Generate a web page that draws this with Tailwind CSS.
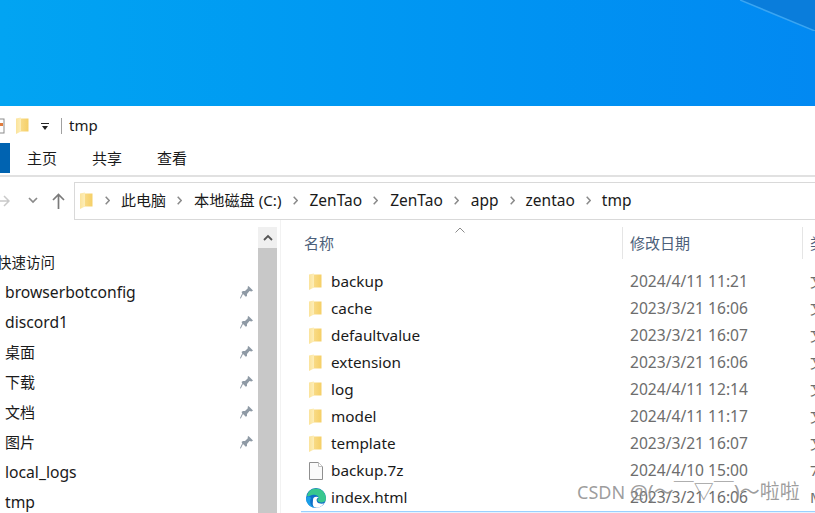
<!DOCTYPE html>
<html lang="zh">
<head>
<meta charset="utf-8">
<script src="https://cdn.jsdelivr.net/npm/@tailwindcss/browser@4"></script>
</head>
<body class="w-[815px] h-[513px] overflow-hidden bg-white font-['Noto_Sans','Noto_Sans_CJK_SC',sans-serif] text-[15.3px] text-[#1a1a1a]">
<svg class="absolute w-0 h-0"><defs>
<linearGradient id="fg" x1="0" x2="1" y1="0" y2="0"><stop offset="0" stop-color="#f9dc8a"/><stop offset="1" stop-color="#f5cf66"/></linearGradient>
<linearGradient id="fl" x1="0" x2="1" y1="0" y2="0"><stop offset="0" stop-color="#fbe39b"/><stop offset="1" stop-color="#fdeeb9"/></linearGradient>
<g id="folder"><path d="M4 1.500 H12.500 V14.500 H4 Z" fill="url(#fg)"/><path d="M0 1.500 L5 .5 V14.500 L0 17 Z" fill="url(#fl)"/></g>
<g id="pin"><path d="M8.500 0 L13 4.500 L11.500 5.500 L9.500 5 L7 8 L7 10 L5.800 10.800 L3 8 L0.700 12.800 L0 12 L2.300 7.300 L1.500 6 L3 5 L5 5 L8 2 L7.500 1 Z" fill="#8f9aa5"/></g>
</defs></svg>

<div class="h-[106px] relative overflow-hidden bg-gradient-to-r from-[#02a4f2] to-[#0289f2]">
  <svg class="absolute right-0 top-0 w-[75px] h-[31px]" viewBox="0 0 75 31"><path d="M0 0 L75 31 V0 Z" fill="#0a7ddb"/><path d="M0 0 L75 31" stroke="#3aa5f2" stroke-width="1.500"/></svg>
</div>

<div class="h-[37px] flex items-center pt-[2px]">
  <svg class="w-[6px] h-[20px] mr-[10px]" viewBox="0 0 6 20"><rect x="-6" y="3" width="10" height="14" fill="#fff" stroke="#8b8b8b"/><rect x="0" y="7" width="3" height="3" fill="#e07b3c"/></svg>
  <svg class="w-[13px] h-[17px] mr-[12px]" viewBox="0 0 13 17"><use href="#folder"/></svg>
  <svg class="w-[8px] h-[8px] mr-[12px] mt-[3px]" viewBox="0 0 8 8"><rect y="0" width="8" height="1" fill="#222"/><path d="M1 3 H7 L4 7 Z" fill="#222"/></svg>
  <div class="w-px h-[16px] bg-[#a0a0a0] mr-[7px]"></div>
  <span class="text-[15px] leading-none">tmp</span>
</div>

<div class="h-[32px] flex items-center border-b-2 border-[#e1e1e1] text-[15px] box-content -mb-px">
  <div class="w-[10px] h-[30px] bg-[#0063b1] -mt-[2px] mr-[17px]"></div>
  <span class="w-[65px] -mt-px">主页</span>
  <span class="w-[65px] -mt-px">共享</span>
  <span class="-mt-px">查看</span>
</div>

<div class="h-[44px] flex items-center pt-[5px]">
  <svg class="w-[10px] h-[14px] mr-[18px]" viewBox="0 0 10 14" fill="none" stroke="#c9c9c9" stroke-width="1.500"><path d="M-2 7 H9 M4 2 L9 7 L4 12"/></svg>
  <svg class="w-[10px] h-[7px] mr-[14px]" viewBox="0 0 10 7" fill="none" stroke="#8a8a8a" stroke-width="1.700"><path d="M1 1 L5 5 L9 1"/></svg>
  <svg class="w-[13px] h-[16px] mr-[9px]" viewBox="0 0 13 16" fill="none" stroke="#7a7a7a" stroke-width="1.700"><path d="M6.500 16 V1.500 M1 7 L6.500 1.500 L12 7"/></svg>
  <div class="flex-1 h-[38px] border border-r-0 border-[#d9d9d9] flex items-center pl-[5px] text-[15.500px] whitespace-nowrap overflow-hidden">
    <svg class="w-[13px] h-[17px] shrink-0" viewBox="0 0 13 17"><use href="#folder"/></svg>
    <svg class="w-[5px] h-[9px] ml-[12px] mr-[11px] shrink-0" viewBox="0 0 5 9" fill="none" stroke="#8a8a8a" stroke-width="1.500"><path d="M.7 .7 L4.200 4.500 L.7 8.300"/></svg>
    <span class="text-[15px]">此电脑</span>
    <svg class="w-[5px] h-[9px] ml-[11px] mr-[12px] shrink-0" viewBox="0 0 5 9" fill="none" stroke="#8a8a8a" stroke-width="1.500"><path d="M.7 .7 L4.200 4.500 L.7 8.300"/></svg>
    <span class="text-[15.200px]">本地磁盘 (C:)</span>
    <svg class="w-[5px] h-[9px] ml-[11px] mr-[12px] shrink-0" viewBox="0 0 5 9" fill="none" stroke="#8a8a8a" stroke-width="1.500"><path d="M.7 .7 L4.200 4.500 L.7 8.300"/></svg>
    <span>ZenTao</span>
    <svg class="w-[5px] h-[9px] ml-[11px] mr-[12px] shrink-0" viewBox="0 0 5 9" fill="none" stroke="#8a8a8a" stroke-width="1.500"><path d="M.7 .7 L4.200 4.500 L.7 8.300"/></svg>
    <span>ZenTao</span>
    <svg class="w-[5px] h-[9px] ml-[11px] mr-[12px] shrink-0" viewBox="0 0 5 9" fill="none" stroke="#8a8a8a" stroke-width="1.500"><path d="M.7 .7 L4.200 4.500 L.7 8.300"/></svg>
    <span>app</span>
    <svg class="w-[5px] h-[9px] mx-[11px] shrink-0" viewBox="0 0 5 9" fill="none" stroke="#8a8a8a" stroke-width="1.500"><path d="M.7 .7 L4.200 4.500 L.7 8.300"/></svg>
    <span>zentao</span>
    <svg class="w-[5px] h-[9px] mx-[11px] shrink-0" viewBox="0 0 5 9" fill="none" stroke="#8a8a8a" stroke-width="1.500"><path d="M.7 .7 L4.200 4.500 L.7 8.300"/></svg>
    <span>tmp</span>
  </div>
</div>

<div class="flex h-[293px] overflow-hidden relative">
  <div class="w-[258px] shrink-0 pt-[28px] overflow-hidden text-[15.700px]">
    <div class="h-[30px] flex items-center -ml-[3px] text-[14.500px]">快速访问</div>
    <div class="h-[30px] flex items-center justify-between px-[5px]"><span>browserbotconfig</span><svg class="w-[13px] h-[13px] -translate-y-px" viewBox="0 0 13 13"><use href="#pin"/></svg></div>
    <div class="h-[30px] flex items-center justify-between px-[5px]"><span>discord1</span><svg class="w-[13px] h-[13px] -translate-y-px" viewBox="0 0 13 13"><use href="#pin"/></svg></div>
    <div class="h-[30px] flex items-center justify-between px-[5px] text-[15px]"><span class="-translate-y-px">桌面</span><svg class="w-[13px] h-[13px] -translate-y-px" viewBox="0 0 13 13"><use href="#pin"/></svg></div>
    <div class="h-[30px] flex items-center justify-between px-[5px] text-[15px]"><span class="-translate-y-px">下载</span><svg class="w-[13px] h-[13px] -translate-y-px" viewBox="0 0 13 13"><use href="#pin"/></svg></div>
    <div class="h-[30px] flex items-center justify-between px-[5px] text-[15px]"><span class="-translate-y-px">文档</span><svg class="w-[13px] h-[13px] -translate-y-px" viewBox="0 0 13 13"><use href="#pin"/></svg></div>
    <div class="h-[30px] flex items-center justify-between px-[5px] text-[15px]"><span class="-translate-y-px">图片</span><svg class="w-[13px] h-[13px] -translate-y-px" viewBox="0 0 13 13"><use href="#pin"/></svg></div>
    <div class="h-[30px] flex items-center pl-[5px]">local_logs</div>
    <div class="h-[30px] flex items-center pl-[5px]">tmp</div>
  </div>
  <div class="w-[19px] shrink-0 flex flex-col pt-[7px] bg-white">
    <div class="h-[21px] bg-[#f0f0f0] flex items-center justify-center"><svg class="w-[10px] h-[7px]" viewBox="0 0 10 7" fill="none" stroke="#555" stroke-width="1.800"><path d="M1 6 L5 2 L9 6"/></svg></div>
    <div class="flex-1 bg-[#c8c8c8]"></div>
  </div>
  <div class="w-[3px] shrink-0"></div>
  <div class="w-px shrink-0 bg-[#f2f2f2]"></div>

  <div class="flex-1 min-w-0 relative overflow-hidden">
    <svg class="absolute left-[174px] top-[7px] w-[10px] h-[6px]" viewBox="0 0 10 6" fill="none" stroke="#8a8a8a"><path d="M.5 5.500 L5 1 L9.500 5.500"/></svg>
    <div class="h-[48px] grid grid-cols-[341px_180px_40px] pt-[7px] text-[15px] text-[#4c607a]">
      <div class="h-[32px] flex items-center pl-[23px]">名称</div>
      <div class="h-[32px] flex items-center pl-[7px] border-l border-[#e5e5e5]">修改日期</div>
      <div class="h-[32px] flex items-center pl-[7px] border-l border-[#e5e5e5] whitespace-nowrap">类型</div>
    </div>

    <div class="h-[27px] grid grid-cols-[341px_180px_40px] items-center">
      <div class="flex items-center pl-[28px]"><svg class="w-[13px] h-[17px] mr-[9px]" viewBox="0 0 13 17"><use href="#folder"/></svg><span>backup</span></div>
      <div class="pl-[8px] text-[#6d6d6d] text-[15.600px]">2024/4/11 11:21</div><div class="pl-[8px] text-[#6d6d6d] text-[15px]">文</div>
    </div>
    <div class="h-[27px] grid grid-cols-[341px_180px_40px] items-center">
      <div class="flex items-center pl-[28px]"><svg class="w-[13px] h-[17px] mr-[9px]" viewBox="0 0 13 17"><use href="#folder"/></svg><span>cache</span></div>
      <div class="pl-[8px] text-[#6d6d6d] text-[15.600px]">2023/3/21 16:06</div><div class="pl-[8px] text-[#6d6d6d] text-[15px]">文</div>
    </div>
    <div class="h-[27px] grid grid-cols-[341px_180px_40px] items-center">
      <div class="flex items-center pl-[28px]"><svg class="w-[13px] h-[17px] mr-[9px]" viewBox="0 0 13 17"><use href="#folder"/></svg><span>defaultvalue</span></div>
      <div class="pl-[8px] text-[#6d6d6d] text-[15.600px]">2023/3/21 16:07</div><div class="pl-[8px] text-[#6d6d6d] text-[15px]">文</div>
    </div>
    <div class="h-[27px] grid grid-cols-[341px_180px_40px] items-center">
      <div class="flex items-center pl-[28px]"><svg class="w-[13px] h-[17px] mr-[9px]" viewBox="0 0 13 17"><use href="#folder"/></svg><span>extension</span></div>
      <div class="pl-[8px] text-[#6d6d6d] text-[15.600px]">2023/3/21 16:06</div><div class="pl-[8px] text-[#6d6d6d] text-[15px]">文</div>
    </div>
    <div class="h-[27px] grid grid-cols-[341px_180px_40px] items-center">
      <div class="flex items-center pl-[28px]"><svg class="w-[13px] h-[17px] mr-[9px]" viewBox="0 0 13 17"><use href="#folder"/></svg><span>log</span></div>
      <div class="pl-[8px] text-[#6d6d6d] text-[15.600px]">2024/4/11 12:14</div><div class="pl-[8px] text-[#6d6d6d] text-[15px]">文</div>
    </div>
    <div class="h-[27px] grid grid-cols-[341px_180px_40px] items-center">
      <div class="flex items-center pl-[28px]"><svg class="w-[13px] h-[17px] mr-[9px]" viewBox="0 0 13 17"><use href="#folder"/></svg><span>model</span></div>
      <div class="pl-[8px] text-[#6d6d6d] text-[15.600px]">2024/4/11 11:17</div><div class="pl-[8px] text-[#6d6d6d] text-[15px]">文</div>
    </div>
    <div class="h-[27px] grid grid-cols-[341px_180px_40px] items-center">
      <div class="flex items-center pl-[28px]"><svg class="w-[13px] h-[17px] mr-[9px]" viewBox="0 0 13 17"><use href="#folder"/></svg><span>template</span></div>
      <div class="pl-[8px] text-[#6d6d6d] text-[15.600px]">2023/3/21 16:07</div><div class="pl-[8px] text-[#6d6d6d] text-[15px]">文</div>
    </div>
    <div class="h-[27px] grid grid-cols-[341px_180px_40px] items-center">
      <div class="flex items-center pl-[28px]"><svg class="w-[14px] h-[18px] mr-[8px]" viewBox="0 0 14 18"><path d="M.5 .5 H9.500 L13.500 4.500 V17.500 H.5 Z" fill="#fafafa" stroke="#8f8f8f"/><path d="M9.500 .5 V4.500 H13.500" fill="#fff" stroke="#bdbdbd"/></svg><span>backup.7z</span></div>
      <div class="pl-[8px] text-[#6d6d6d] text-[15.600px]">2024/4/10 15:00</div><div class="pl-[8px] text-[#6d6d6d] text-[15px]">7</div>
    </div>
    <div class="h-[27px] grid grid-cols-[341px_180px_40px] items-center">
      <div class="flex items-center pl-[25px]"><svg class="w-[20px] h-[20px] mr-[5px]" viewBox="0 0 20 20"><circle cx="10" cy="10" r="10" fill="#0f6fc8"/><path d="M1 8 C2 2 8 -1 13 1 C17 2 20 6 20 11 C20 14 16 15 13 14 C11 13 11 11 13 10 C12 7 9 6 6 7 C3 8 2 9 1 8 Z" fill="#38c78e"/><path d="M7 12 C7 9 10 8 13 9.500 C10 10 10 13 12 15 C15 16 17 16 18 15 C16 19 11 21 8 19 C6 17 7 14 7 12 Z" fill="#fff"/><path d="M5 10 C3 14 5 19 10 20 C6 20 0 17 0 10 C1 8 4 8 5 10 Z" fill="#1a9fe8"/></svg><span>index.html</span></div>
      <div class="pl-[8px] text-[#6d6d6d] text-[15.600px]">2023/3/21 16:06</div><div class="pl-[8px] text-[#6d6d6d] text-[15px]">M</div>
    </div>
    <div class="absolute left-[20px] right-0 top-[291px] h-[2px] border-t border-[#99d1ff] bg-[#e5f3ff]"></div>
  </div>

  <div class="absolute left-[577px] top-[260px] text-[#8c8c8c]/85 text-[18px] leading-[24px] whitespace-nowrap">CSDN <span class="text-[20px]">@(～￣▽￣)～啦啦</span></div>
</div>
</body>
</html>
